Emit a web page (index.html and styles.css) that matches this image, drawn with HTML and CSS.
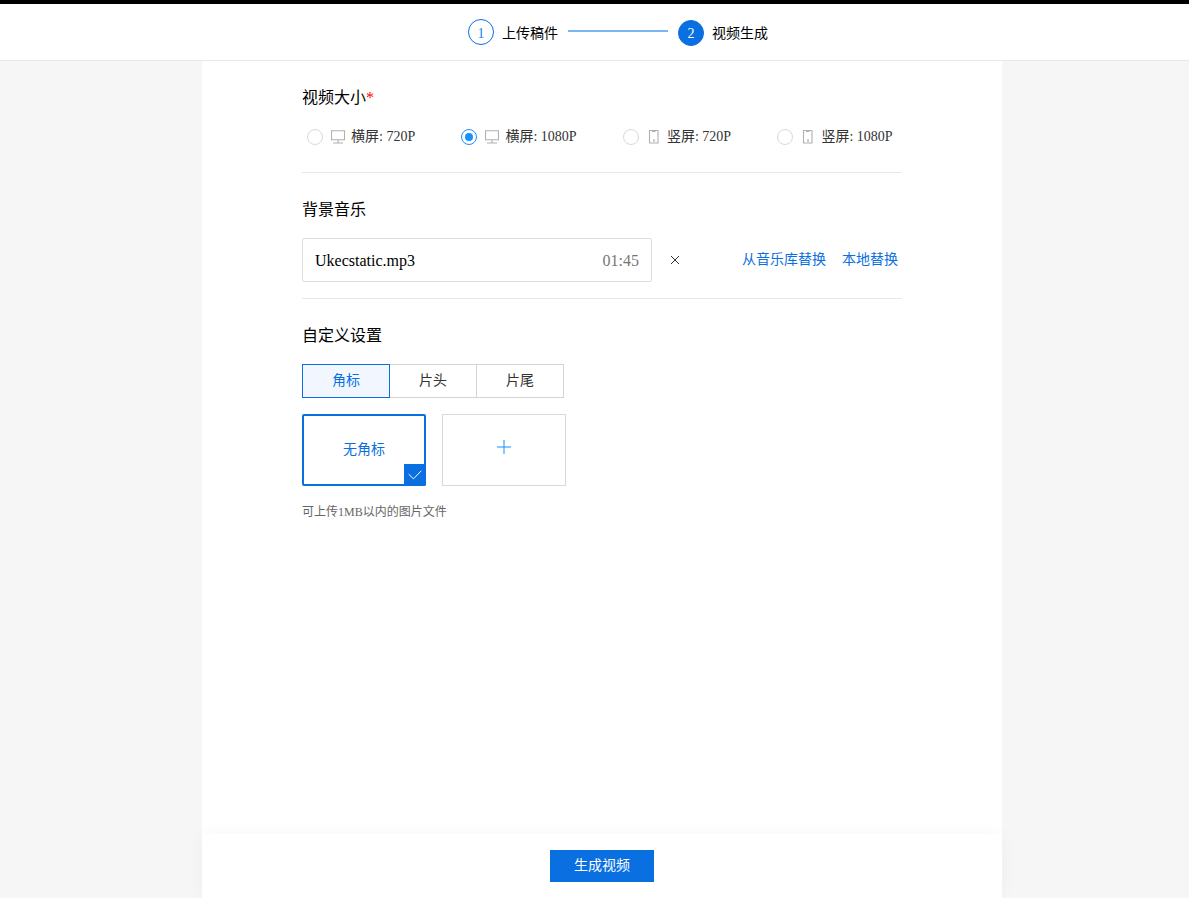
FILE: index.html
```html
<!DOCTYPE html>
<html lang="zh-CN">
<head>
  <meta charset="UTF-8" />
  <meta name="viewport" content="width=device-width, initial-scale=1.0"/>
  <title>视频生成</title>
  <link rel="stylesheet" href="styles.css">
</head>
<body>
  <header class="header">
    <div class="step">
      <span class="step-num">1</span>
      <span class="step-text">上传稿件</span>
    </div>
    <div class="step-line"></div>
    <div class="step active">
      <span class="step-num">2</span>
      <span class="step-text">视频生成</span>
    </div>
  </header>

  <main class="panel">
    <section class="section size">
      <h2>视频大小<span class="required">*</span></h2>
      <div class="radios">
        <label class="radio">
          <span class="dot"></span>
          <svg class="icon" width="14" height="14" viewBox="0 0 14 14"><path d="M.5 .7h13v9H.5zM7 10v3M2 13h10"/></svg>
          <span class="radio-text">横屏: 720P</span>
        </label>
        <label class="radio checked">
          <span class="dot"></span>
          <svg class="icon" width="14" height="14" viewBox="0 0 14 14"><path d="M.5 .7h13v9H.5zM7 10v3M2 13h10"/></svg>
          <span class="radio-text">横屏: 1080P</span>
        </label>
        <label class="radio">
          <span class="dot"></span>
          <svg class="icon" width="14" height="14" viewBox="0 0 14 14"><path d="M2.500 .5h8.500v12.500h-8.500zM5 1.500h3.500M6 10h2M7 10v2"/></svg>
          <span class="radio-text">竖屏: 720P</span>
        </label>
        <label class="radio">
          <span class="dot"></span>
          <svg class="icon" width="14" height="14" viewBox="0 0 14 14"><path d="M2.500 .5h8.500v12.500h-8.500zM5 1.500h3.500M6 10h2M7 10v2"/></svg>
          <span class="radio-text">竖屏: 1080P</span>
        </label>
      </div>
    </section>

    <section class="section music">
      <h2>背景音乐</h2>
      <div class="music-row">
        <div class="music-box">
          <span>Ukecstatic.mp3</span>
          <span class="time">01:45</span>
        </div>
        <svg class="close" width="10" height="10" viewBox="0 0 10 10"><path d="M1 1l8 8M9 1L1 9"/></svg>
        <div class="links">
          <a>从音乐库替换</a>
          <a>本地替换</a>
        </div>
      </div>
    </section>

    <section class="section custom">
      <h2>自定义设置</h2>
      <div class="tabs">
        <div class="tab active">角标</div>
        <div class="tab">片头</div>
        <div class="tab">片尾</div>
      </div>
      <div class="cards">
        <div class="card selected">
          无角标
          <span class="check">
            <svg width="14" height="10" viewBox="0 0 14 10"><path d="M.7 4.200l4.800 4.600L13.300 .8"/></svg>
          </span>
        </div>
        <div class="card">
          <svg class="plus" width="14" height="14" viewBox="0 0 14 14"><path d="M7 0v14"/><path d="M0 7h14"/></svg>
        </div>
      </div>
      <p class="hint">可上传1MB以内的图片文件</p>
    </section>

    <footer class="footer">
      <button>生成视频</button>
    </footer>
  </main>
</body>
</html>
```

FILE: styles.css
```css
* {
  box-sizing: border-box;
}

body {
  margin: 0;
  height: 100vh;
  display: flex;
  flex-direction: column;
  overflow: hidden;
  font-family: "Liberation Serif", "Noto Sans CJK SC", serif;
  font-size: 14px;
  line-height: 22px;
  color: #000;
  background: #f6f6f6;
}

.header {
  display: flex;
  align-items: flex-start;
  height: 61px;
  padding: 15px 0 0 468px;
  background: #fff;
  border-top: 4px solid #000;
  border-bottom: 1px solid #e8e8e8;
}

.step {
  display: flex;
  align-items: center;
  gap: 8px;
}

.step.active {
  margin-top: 1px;
}

.step-num {
  width: 26px;
  height: 26px;
  line-height: 28px;
  text-align: center;
  border: 1px solid #0a6fe0;
  border-radius: 50%;
  color: #1f80e8;
}

.step.active .step-num {
  line-height: 26px;
  color: #fff;
  background: #0a6fe0;
}

.step-text {
  padding-top: 4px;
}

.step.active .step-text {
  padding-top: 2px;
}

.step-line {
  width: 100px;
  height: 2px;
  margin: 11px 10px 0;
  background: #7ab4f2;
}

.panel {
  flex: 1;
  display: flex;
  flex-direction: column;
  width: 800px;
  margin-left: 202px;
  background: #fff;
}

.section {
  margin: 0 100px;
  padding-top: 25px;
  border-bottom: 1px solid #e8e8e8;
}

h2 {
  margin: 0;
  font-size: 16px;
  line-height: 24px;
  font-weight: normal;
}

.required {
  color: #f00;
}

.size {
  height: 112px;
}

.radios {
  display: flex;
  gap: 46.3px;
  padding: 15px 0 0 5px;
}

.radio {
  display: flex;
  align-items: center;
  height: 22px;
  white-space: nowrap;
  color: #333;
}

.radio-text {
  padding-top: 2px;
}

.dot {
  display: flex;
  align-items: center;
  justify-content: center;
  width: 16px;
  height: 16px;
  margin-top: 2px;
  border: 1px solid #d9d9d9;
  border-radius: 50%;
}

.checked .dot {
  border-color: #1890ff;
}

.checked .dot::after {
  content: "";
  width: 8px;
  height: 8px;
  border-radius: 50%;
  background: #1890ff;
}

.icon {
  margin: 2px 6px 0 8px;
  fill: none;
  stroke: #b0b0b0;
  stroke-width: 1.1;
}

.music {
  height: 126px;
}

.music-row {
  display: flex;
  align-items: center;
  padding-top: 16px;
}

.music-box {
  display: flex;
  align-items: center;
  justify-content: space-between;
  width: 350px;
  height: 44px;
  padding: 2px 12px 0;
  font-size: 16px;
  border: 1px solid #dcdfe6;
  border-radius: 2px;
}

.time {
  color: #777;
}

.close {
  margin-left: 18px;
  stroke: #333;
}

.links {
  display: flex;
  gap: 16px;
  margin: 0 4px 0 auto;
  color: #0a6fe0;
}

.custom {
  flex: 1;
  border-bottom: none;
}

.tabs {
  display: flex;
  margin-top: 16px;
}

.tab {
  width: 87px;
  height: 34px;
  line-height: 32px;
  text-align: center;
  color: #333;
  border: 1px solid #d4d4d4;
  border-left: none;
}

.tab.active {
  width: 88px;
  color: #0a6fe0;
  background: #f2f7ff;
  border: 1px solid #0a6fe0;
}

.cards {
  display: flex;
  gap: 16px;
  margin-top: 16px;
}

.card {
  position: relative;
  display: flex;
  align-items: center;
  justify-content: center;
  width: 124px;
  height: 72px;
  border: 1px solid #d9d9d9;
}

.card.selected {
  color: #0a6fe0;
  border: 2px solid #0a6fe0;
  border-radius: 2px;
}

.check {
  position: absolute;
  right: -2px;
  bottom: -2px;
  display: flex;
  align-items: center;
  justify-content: center;
  width: 22px;
  height: 22px;
  background: #0a6fe0;
  border-bottom-right-radius: 2px;
}

.check svg {
  fill: none;
  stroke: #fff;
}

.plus {
  margin-bottom: 6px;
  stroke: #1890ff;
  stroke-width: 2;
  stroke-opacity: .5;
}

.hint {
  margin: 15px 0 0;
  font-size: 12px;
  color: #666;
}

.footer {
  display: flex;
  align-items: center;
  justify-content: center;
  height: 64px;
  background: #fff;
  box-shadow: 0 0 16px rgba(0, 0, 0, .04);
}

button {
  width: 104px;
  height: 32px;
  padding: 0;
  font: inherit;
  color: #fff;
  background: #0a6fe0;
  border: none;
}
```
